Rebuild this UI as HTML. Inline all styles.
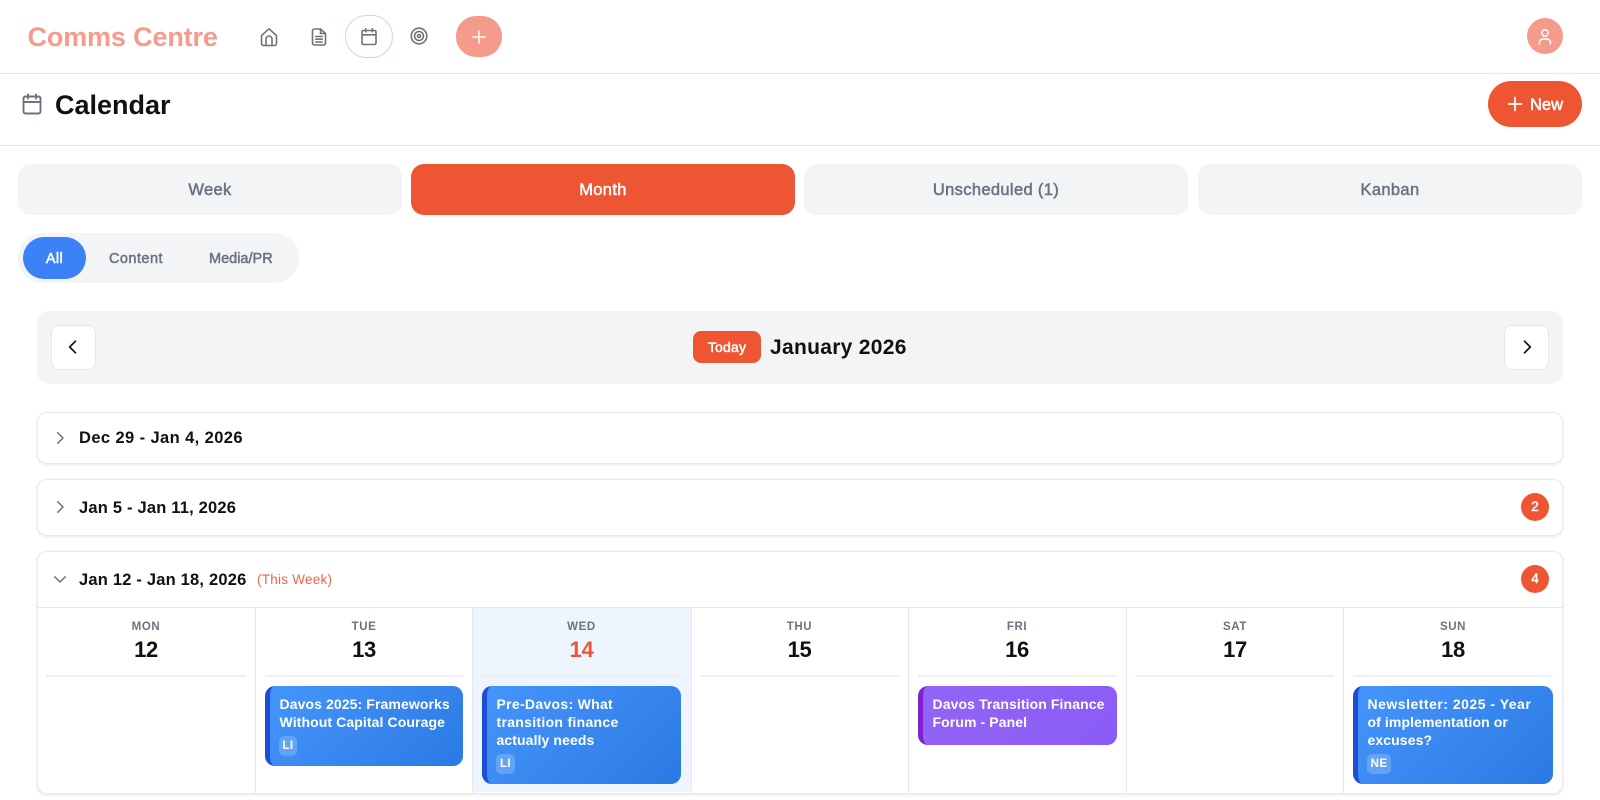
<!DOCTYPE html>
<html lang="en"><head><meta charset="utf-8"><title>Calendar</title>
<style>
*{box-sizing:border-box}
html,body{margin:0;padding:0;background:#fff}
body{width:1600px;height:800px;overflow:hidden;position:relative;font-family:"Liberation Sans",sans-serif;color:#111}
.a,.t{position:absolute}
.t{white-space:nowrap}
.c{transform:translateX(-50%)}
svg{position:absolute;fill:none;stroke-linecap:round;stroke-linejoin:round}
.m{font-weight:normal;-webkit-text-stroke:.5px currentColor}
.tab{position:absolute;top:164px;height:51px;width:384px;border-radius:13px;background:#f3f4f6;color:#6b7280;font-size:16.5px;line-height:53px;text-align:center;letter-spacing:.35px;font-weight:normal;-webkit-text-stroke:.5px currentColor}
.card{position:absolute;left:37px;width:1526px;background:#fff;border:1.5px solid #e8e9ed;border-radius:10px;box-shadow:0 1px 3px rgba(0,0,0,.1)}
.wk{font-size:16.5px;font-weight:bold;color:#111;left:79px;line-height:20px}
.badge{position:absolute;left:1521px;width:28px;height:28px;border-radius:50%;background:#ee5533;color:#fff;font-size:13.5px;text-align:center;line-height:28px;font-weight:normal;-webkit-text-stroke:.5px #fff}
.dn{font-size:11.5px;font-weight:bold;color:#6b7280;letter-spacing:.6px;top:619.5px;line-height:14px}
.dd{font-size:22px;font-weight:bold;color:#111;top:637px;line-height:26px;letter-spacing:-.3px}
.dv{position:absolute;top:675px;height:2px;background:#eeeff2}
.sep{position:absolute;top:607px;width:1px;height:186px;background:#e6e7eb}
.ev{position:absolute;top:686px;border-radius:10px;color:#fff;overflow:hidden;border-left:5px solid #1d4ed8;background:linear-gradient(135deg,#4596fb,#2b7ae4);background-origin:border-box}
.ev.p{background:linear-gradient(135deg,#9264f6,#8a5cf6);border-left-color:#7e22ce;background-origin:border-box}
.ev div{position:absolute;left:9.5px;top:8.5px;font-size:14px;font-weight:bold;line-height:18.3px;letter-spacing:.1px;white-space:nowrap}
.ev span{position:absolute;left:9px;height:20px;border-radius:5px;background:rgba(255,255,255,.2);font-size:11.5px;font-weight:bold;line-height:20px;text-align:center;letter-spacing:.4px}
.ev div span{position:static;background:none;font-size:14px;line-height:18.3px}
</style></head><body>

<div class="t" style="left:27.5px;top:22px;font-size:27px;font-weight:bold;line-height:30px;color:#f69b8c;letter-spacing:-.15px">Comms Centre</div>

<svg style="left:259px;top:27px" width="20" height="20" viewBox="0 0 20 20" stroke="#6f7278" stroke-width="1.6"><path d="M2.500 8.500 10 1.800l7.500 6.700V16.500a2 2 0 0 1-2 2h-11a2 2 0 0 1-2-2z"/><path d="M7 18.500v-6.500a3 3 0 0 1 6 0v6.500"/></svg>
<svg style="left:309px;top:26.500px" width="20" height="20" viewBox="0 0 20 20" stroke="#6f7278" stroke-width="1.6"><path d="M11.500 2H5.500a2 2 0 0 0-2 2v12a2 2 0 0 0 2 2h9a2 2 0 0 0 2-2V6.500z"/><path d="M11.500 2v4.500h5M6.800 9.500h6.400M6.800 12.200h6.400M6.800 15h6.400"/></svg>
<div class="a" style="left:345px;top:15px;width:48px;height:43px;border:1.2px solid #c3d8fb;border-radius:22px"></div>
<svg style="left:359px;top:27px" width="20" height="20" viewBox="0 0 20 20" stroke="#6f7278" stroke-width="1.6"><rect x="3" y="3.500" width="14" height="14" rx="1.500"/><path d="M3 7.800h14M6.700 1.800v3M13.300 1.800v3"/></svg>
<svg style="left:409px;top:26px" width="20" height="20" viewBox="0 0 20 20" stroke="#6f7278" stroke-width="1.600"><circle cx="10" cy="10" r="7.800"/><circle cx="10" cy="10" r="4.500"/><circle cx="10" cy="10" r="1.500"/></svg>
<div class="a" style="left:456px;top:16px;width:46px;height:41px;border-radius:20px;background:#f59b8c"></div>
<svg style="left:469px;top:27px" width="20" height="20" viewBox="0 0 20 20" stroke="#fff" stroke-width="1.500"><path d="M10 4v12M4 10h12"/></svg>

<div class="a" style="left:1527px;top:18px;width:36px;height:36px;border-radius:50%;background:#f59b8c"></div>
<svg style="left:1535px;top:26px" width="20" height="20" viewBox="0 0 20 20" stroke="#fff" stroke-width="1.500"><circle cx="10" cy="7" r="3.200"/><path d="M4.500 18v-1.500a3.500 3.500 0 0 1 3.500-3.500h4a3.500 3.500 0 0 1 3.500 3.500V18"/></svg>

<div class="a" style="left:0;top:73px;width:1600px;height:1px;background:#e9eaec"></div>

<svg style="left:20px;top:92px" width="24" height="24" viewBox="0 0 24 24" stroke="#6b7280" stroke-width="1.900"><rect x="3.500" y="4.500" width="17" height="17" rx="2"/><path d="M3.500 10h17M8 2.500v4M16 2.500v4"/></svg>
<div class="t" style="left:55px;top:89px;font-size:27px;font-weight:bold;line-height:32px;color:#111">Calendar</div>

<div class="a" style="left:1488px;top:81px;width:94px;height:46px;border-radius:23px;background:#ee5533"></div>
<svg style="left:1505px;top:94px" width="20" height="20" viewBox="0 0 20 20" stroke="#fff" stroke-width="1.700"><path d="M10 3.500v13M3.500 10h13"/></svg>
<div class="t m" style="left:1530px;top:95px;font-size:16.500px;line-height:20px;color:#fff">New</div>

<div class="a" style="left:0;top:145px;width:1600px;height:1px;background:#e6e7e9"></div>

<div class="tab" style="left:18px">Week</div>
<div class="tab" style="left:411px;background:#ee5533;color:#fff">Month</div>
<div class="tab" style="left:804px;width:384px">Unscheduled (1)</div>
<div class="tab" style="left:1198px">Kanban</div>

<div class="a" style="left:18px;top:233px;width:281px;height:50px;border-radius:25px;background:#f3f4f6"></div>
<div class="a" style="left:23px;top:237px;width:63px;height:42px;border-radius:21px;background:#3b82f6"></div>
<div class="t c m" style="left:54.500px;top:251px;font-size:14.500px;line-height:16px;color:#fff;letter-spacing:.4px">All</div>
<div class="t m" style="left:109px;top:251px;font-size:14.500px;line-height:16px;color:#6b7280;letter-spacing:.45px">Content</div>
<div class="t m" style="left:209px;top:251px;font-size:14.500px;line-height:16px;color:#6b7280">Media/PR</div>

<div class="a" style="left:37px;top:311px;width:1526px;height:73px;border-radius:13px;background:#f3f4f6"></div>
<div class="a" style="left:51px;top:325px;width:45px;height:45px;border-radius:8px;background:#fff;border:1px solid #e5e7eb"></div>
<svg style="left:63px;top:337px" width="20" height="20" viewBox="0 0 24 24" stroke="#111" stroke-width="2"><path d="M15 5l-7 7 7 7"/></svg>
<div class="a" style="left:1504px;top:325px;width:45px;height:45px;border-radius:8px;background:#fff;border:1px solid #e5e7eb"></div>
<svg style="left:1517px;top:337px" width="20" height="20" viewBox="0 0 24 24" stroke="#111" stroke-width="2"><path d="M9 5l7 7-7 7"/></svg>
<div class="a m" style="left:693px;top:331px;width:68px;height:32px;border-radius:8px;background:#ee5533;color:#fff;font-size:14px;line-height:33px;text-align:center;letter-spacing:.2px">Today</div>
<div class="t" style="left:770px;top:335px;font-size:21px;font-weight:bold;line-height:26px;color:#111;letter-spacing:.3px">January 2026</div>

<div class="card" style="top:412px;height:52px"></div>
<svg style="left:51px;top:429px" width="18" height="18" viewBox="0 0 24 24" stroke="#6b7280" stroke-width="2"><path d="M9 5l7 7-7 7"/></svg>
<div class="t wk" style="top:427.500px;letter-spacing:.4px">Dec 29 - Jan 4, 2026</div>

<div class="card" style="top:479px;height:57px"></div>
<svg style="left:51px;top:498px" width="18" height="18" viewBox="0 0 24 24" stroke="#6b7280" stroke-width="2"><path d="M9 5l7 7-7 7"/></svg>
<div class="t wk" style="top:497.500px;letter-spacing:.2px">Jan 5 - Jan 11, 2026</div>
<div class="badge" style="top:493px">2</div>

<div class="card" style="top:551px;height:243px"></div>
<svg style="left:51px;top:570px" width="18" height="18" viewBox="0 0 24 24" stroke="#6b7280" stroke-width="2"><path d="M5 9l7 7 7-7"/></svg>
<div class="t wk" style="top:569.500px;letter-spacing:.2px">Jan 12 - Jan 18, 2026</div>
<div class="t" style="left:257px;top:572px;font-size:13.500px;line-height:16px;color:#f4604a;letter-spacing:.25px">(This Week)</div>
<div class="badge" style="top:565px">4</div>

<div class="a" style="left:38px;top:607px;width:1524px;height:1px;background:#e6e7eb"></div>
<div class="a" style="left:473px;top:608px;width:218px;height:184px;background:#eff5fe"></div>
<div class="sep" style="left:255px"></div>
<div class="sep" style="left:472px"></div>
<div class="sep" style="left:690.500px"></div>
<div class="sep" style="left:908px"></div>
<div class="sep" style="left:1126px"></div>
<div class="sep" style="left:1343px"></div>

<div class="t c dn" style="left:146px">MON</div><div class="t c dd" style="left:146px">12</div><div class="dv" style="left:46px;width:200px"></div>
<div class="t c dn" style="left:364px">TUE</div><div class="t c dd" style="left:364px">13</div><div class="dv" style="left:265px;width:198px"></div>
<div class="t c dn" style="left:581.500px">WED</div><div class="t c dd" style="left:581.500px;color:#ee5533">14</div><div class="dv" style="left:482px;width:199px"></div>
<div class="t c dn" style="left:799.500px">THU</div><div class="t c dd" style="left:799.500px">15</div><div class="dv" style="left:700px;width:199px"></div>
<div class="t c dn" style="left:1017px">FRI</div><div class="t c dd" style="left:1017px">16</div><div class="dv" style="left:918px;width:199px"></div>
<div class="t c dn" style="left:1235px">SAT</div><div class="t c dd" style="left:1235px">17</div><div class="dv" style="left:1135px;width:199px"></div>
<div class="t c dn" style="left:1453px">SUN</div><div class="t c dd" style="left:1453px">18</div><div class="dv" style="left:1353px;width:200px"></div>

<div class="ev" style="left:265px;width:198px;height:80px"><div>Davos 2025: Frameworks<br>Without Capital Courage</div><span style="top:50px;width:18px">LI</span></div>
<div class="ev" style="left:482px;width:199px;height:98px"><div><span style="letter-spacing:.3px">Pre-Davos: What</span><br><span style="letter-spacing:.3px">transition finance</span><br>actually needs</div><span style="top:68px;width:19px">LI</span></div>
<div class="ev p" style="left:918px;width:199px;height:59px"><div>Davos Transition Finance<br>Forum - Panel</div></div>
<div class="ev" style="left:1353px;width:200px;height:98px"><div><span style="letter-spacing:.5px">Newsletter: 2025 - Year</span><br>of implementation or<br>excuses?</div><span style="top:68px;width:24px">NE</span></div>

</body></html>
